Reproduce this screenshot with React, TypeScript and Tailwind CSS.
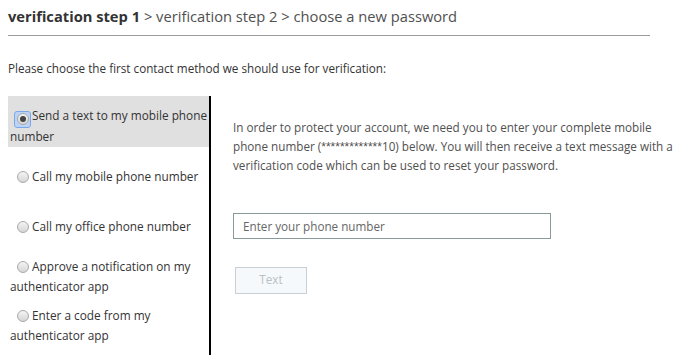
import { useState } from 'react'

const options = [
  { id: 'sms', label: 'Send a text to my mobile phone number', box: 'h-[51px] pt-[10px]' },
  { id: 'call', label: 'Call my mobile phone number', box: 'h-[50px] pt-[20px]' },
  { id: 'office', label: 'Call my office phone number', box: 'h-[50px] pt-[20px]' },
  { id: 'notify', label: 'Approve a notification on my authenticator app', box: 'h-[49px] pt-[10px]' },
  { id: 'code', label: 'Enter a code from my authenticator app', box: 'h-[60px] pt-[10px]' },
]

function Radio({ checked }: { checked: boolean }) {
  return (
    <span
      className={`relative ml-[5px] mr-[2px] inline-flex h-[15px] w-[15px] items-center justify-center align-[-2px] ${
        checked ? 'rounded-[2px] bg-[#bcd3f5] outline outline-1 outline-[#7aa7ea]' : ''
      }`}
    >
      <span className="flex h-[12px] w-[12px] items-center justify-center rounded-full border border-[#a9a9a9] bg-gradient-to-b from-[#f4f4f4] to-[#d6d6d6]">
        {checked && <span className="h-[6px] w-[6px] rounded-full bg-[#444]" />}
      </span>
    </span>
  )
}

export default function App() {
  const [active, setActive] = useState('sms')

  return (
    <div className="h-[355px] w-[679px] overflow-hidden bg-white px-2 pt-[5px] font-['Open_Sans',sans-serif]">
      <div className="w-[642px] border-b border-[#9c9c9c] pb-[8px] text-[14.7px] leading-[22px] text-[#505050]">
        <span className="font-bold text-[#333]">verification step 1</span> &gt; verification step 2 &gt; choose a new password
      </div>
      <p className="mt-[24px] text-[11.7px] leading-[16px] text-[#333]">
        Please choose the first contact method we should use for verification:
      </p>
      <div className="mt-[20px] flex">
        <div className="w-[203px] shrink-0 border-r-2 border-black">
          {options.map((o) => (
            <div
              key={o.id}
              onClick={() => setActive(o.id)}
              className={`${o.box} cursor-pointer pl-[2px] text-[11.8px] leading-[19.5px] text-[#333] ${
                active === o.id ? 'bg-[#e0e0e0]' : ''
              }`}
            >
              <Radio checked={active === o.id} />
              {o.label}
            </div>
          ))}
        </div>
        <div className="flex-1 pl-[22px] pt-[21.5px]">
          <p className="w-[440px] text-[11.7px] leading-[19px] text-[#505050]">
            In order to protect your account, we need you to enter your complete mobile phone number (
            <span className="font-['Liberation_Sans',sans-serif] text-[12px] leading-[0]">*************</span>10) below.
            You will then receive a text message with a verification code which can be used to reset your
            password.
          </p>
          <input
            type="text"
            placeholder="Enter your phone number"
            className="mt-[38px] block h-[26px] w-[318px] border border-[#8a9a9a] px-[9px] text-[11.7px] text-[#333] outline-none placeholder:text-[#666]"
          />
          <button
            type="button"
            disabled
            className="ml-[2px] mt-[28px] block h-[27px] w-[72px] border border-[#c8d0d4] bg-[#f6f9fb] text-[11.7px] text-[#b8c0c4]"
          >
            Text
          </button>
        </div>
      </div>
    </div>
  )
}
